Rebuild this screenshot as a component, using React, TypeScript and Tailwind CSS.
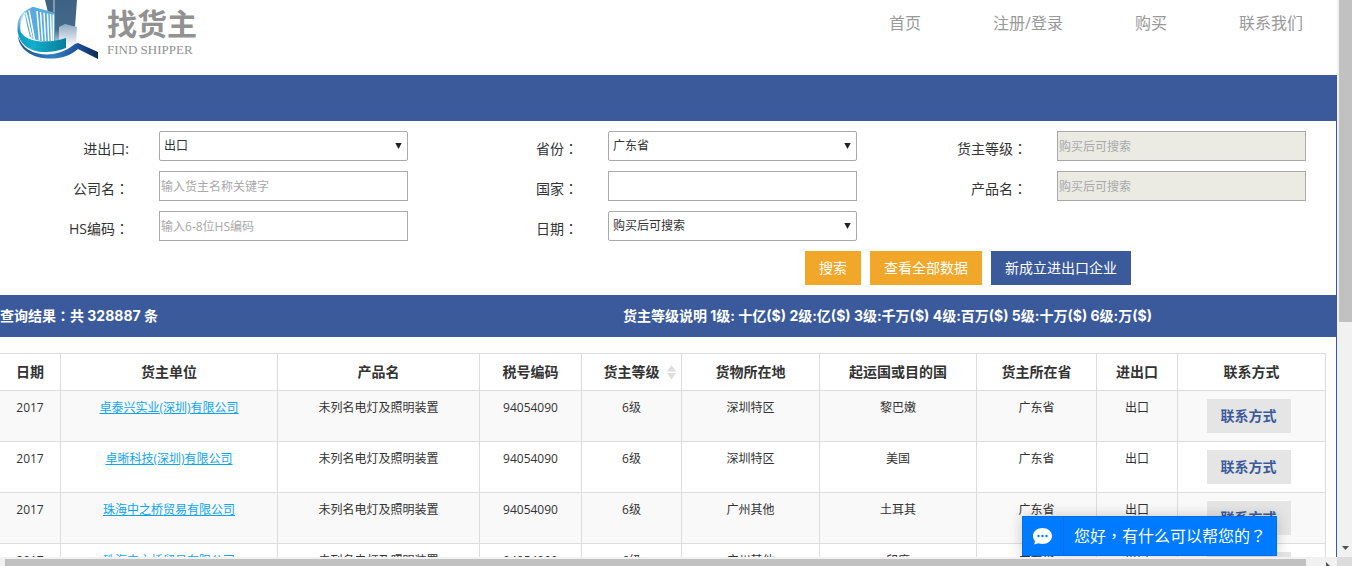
import { useState } from "react";
import type { ReactNode } from "react";

const NAV = ["首页", "注册/登录", "购买", "联系我们"];

const ROWS = [
  { company: "卓泰兴实业(深圳)有限公司", place: "深圳特区", country: "黎巴嫩" },
  { company: "卓晰科技(深圳)有限公司", place: "深圳特区", country: "美国" },
  { company: "珠海中之桥贸易有限公司", place: "广州其他", country: "土耳其" },
  { company: "珠海中之桥贸易有限公司", place: "广州其他", country: "印度" },
];

const HEAD_CELL = "h-[37px] border-r border-b border-[#ddd] p-0 text-center align-middle text-sm font-bold";
const CELL = "border-r border-b border-[#ddd] px-2 py-2 text-center align-top text-xs leading-[18px]";
const CONTROL =
  "block h-[30px] w-full border border-[#a9a9a9] text-xs text-[#333] placeholder:text-[#a9a9a9] outline-none";

/* Full-width punctuation, centred in its em box. */
function Mark({ children }: { children: ReactNode }) {
  return <span className="font-['Noto_Sans_CJK_TC',sans-serif] leading-none">{children}</span>;
}

function Logo() {
  return (
    <a href="#" className="flex items-start gap-2 pl-4 text-[#929292]">
      <svg width="83" height="60" viewBox="0 0 83 60" aria-hidden="true">
        <defs>
          <linearGradient id="ring" x1="0" x2="1">
            <stop offset="0" stopColor="#0a9cc4" />
            <stop offset=".3" stopColor="#12aecb" />
            <stop offset="1" stopColor="#077e9c" />
          </linearGradient>
          <linearGradient id="rim" x1="0" x2="1">
            <stop offset="0" stopColor="#1c4f94" />
            <stop offset=".45" stopColor="#2f7fc4" />
            <stop offset=".75" stopColor="#1f4f98" />
            <stop offset="1" stopColor="#0d2c50" />
          </linearGradient>
          <linearGradient id="block" x1="0" x2="0" y1="0" y2="1">
            <stop offset="0" stopColor="#8fa9bf" />
            <stop offset="1" stopColor="#ffffff" />
          </linearGradient>
          <linearGradient id="tower" x1="0" x2="0" y1="0" y2="1">
            <stop offset="0" stopColor="#3e6282" />
            <stop offset=".7" stopColor="#44698a" />
            <stop offset="1" stopColor="#b5c7d5" />
          </linearGradient>
          <linearGradient id="arc" x1="0" x2="0" y1="0" y2="1">
            <stop offset="0" stopColor="#bfe2f5" />
            <stop offset="1" stopColor="#1b85bd" />
          </linearGradient>
        </defs>
        <path d="M29 0h32l-2 27-1 14-19 1z" fill="url(#tower)" />
        <path d="M38 0v12" stroke="#c4d3df" strokeWidth="1" />
        <path d="M43 27l6-3 12 3-1 17-10 3-7-6z" fill="url(#block)" />
        <path d="M7.500 12l9.200-5.300L39 12.700V41c-9 2-18 0-25-4z" fill="#58abe0" />
        <path
          d="M10 12.500l6 25M13 10.500l5.500 29M21 11l2.500 29.500M24.500 12l2 29M28 12.800l1.600 28.500M31.500 13.500l1.200 28M34.500 14l1 27M37.300 14.500v27"
          stroke="#fff"
          strokeWidth="1.5"
        />
        <path d="M14 7.500C6 12 1.500 18 1.500 27v5l4 6C3 28 5 18 12 9z" fill="url(#arc)" />
        <path d="M9 12C4 18 3.500 24 4.500 29l8 8z" fill="#fff" opacity=".65" />
        <path d="M2 27c3 8 9 12.500 19 14 10 1.500 20 0 29-3v10c-9 3.500-19 5-28 3.500C11 49.500 3 42 2 33z" fill="url(#ring)" />
        <path
          d="M2 36c3 9 9 15 20 17.500 12 2.500 24-.5 32-6 3-2 5.500-4.500 8-4.500l20 9v7l-20-10c-8 7-18 10-30 9.500C17 58 3 50 2 36z"
          fill="url(#rim)"
        />
      </svg>
      <span className="block pt-1.5">
        <span className="block text-[30px] leading-9 font-bold">找货主</span>
        <span className="block font-['Liberation_Serif',serif] text-[13px] leading-4">FIND SHIPPER</span>
      </span>
    </a>
  );
}

function Field({ id, label, children }: { id: string; label: ReactNode; children: ReactNode }) {
  return (
    <div className="flex h-[30px]">
      <label htmlFor={id} className="mr-[30px] w-[129px] shrink-0 pt-2 text-right text-sm leading-5">
        {label}
      </label>
      <div className="min-w-0 flex-1">{children}</div>
    </div>
  );
}

function Select({ id, options }: { id: string; options: string[] }) {
  return (
    <div className="relative">
      <select id={id} className={`${CONTROL} appearance-none rounded-[2px] bg-white px-1`}>
        {options.map((o) => (
          <option key={o}>{o}</option>
        ))}
      </select>
      <svg className="pointer-events-none absolute top-3 right-1.5" width="7" height="6" viewBox="0 0 7 6" aria-hidden="true">
        <path d="M.3 0h6.400L3.500 6z" fill="#222" />
      </svg>
    </div>
  );
}

function TextField({ id, placeholder, disabled }: { id: string; placeholder?: string; disabled?: boolean }) {
  return (
    <input
      id={id}
      type="text"
      placeholder={placeholder}
      disabled={disabled}
      className={`${CONTROL} bg-white px-px disabled:bg-[#ebebe4]`}
    />
  );
}

function SearchForm() {
  return (
    <form className="py-2.5" onSubmit={(e) => e.preventDefault()}>
      <div className="grid grid-cols-3 gap-x-[41px] gap-y-2.5 pr-[30px]">
        <Field id="direction" label="进出口:">
          <Select id="direction" options={["出口", "进口"]} />
        </Field>
        <Field id="province" label={<>省份<Mark>：</Mark></>}>
          <Select id="province" options={["广东省"]} />
        </Field>
        <Field id="level" label={<>货主等级<Mark>：</Mark></>}>
          <TextField id="level" placeholder="购买后可搜索" disabled />
        </Field>
        <Field id="company" label={<>公司名<Mark>：</Mark></>}>
          <TextField id="company" placeholder="输入货主名称关键字" />
        </Field>
        <Field id="country" label={<>国家<Mark>：</Mark></>}>
          <TextField id="country" />
        </Field>
        <Field id="product" label={<>产品名<Mark>：</Mark></>}>
          <TextField id="product" placeholder="购买后可搜索" disabled />
        </Field>
        <Field id="hs" label={<>HS编码<Mark>：</Mark></>}>
          <TextField id="hs" placeholder="输入6-8位HS编码" />
        </Field>
        <Field id="date" label={<>日期<Mark>：</Mark></>}>
          <Select id="date" options={["购买后可搜索"]} />
        </Field>
      </div>
      <div className="mt-2.5 flex justify-end gap-[9px] pr-[205px] text-sm text-white">
        <button type="submit" className="h-[34px] bg-[#f0a72a] px-3.5">搜索</button>
        <button type="button" className="h-[34px] bg-[#f0a72a] px-3.5">查看全部数据</button>
        <button type="button" className="h-[34px] bg-[#3b5a9c] px-3.5">新成立进出口企业</button>
      </div>
    </form>
  );
}

function SortMark() {
  return (
    <svg width="9" height="16" viewBox="0 0 9 16" className="ml-[7px]" aria-hidden="true">
      <path d="M4.5 1L9 7.5H0zM4.5 15.500L9 9H0z" fill="#ddd" />
    </svg>
  );
}

function Results() {
  return (
    <table className="w-full table-fixed border-separate border-spacing-0 border-t border-[#ddd]">
      <colgroup>
        <col className="w-[61px]" />
        <col className="w-[217px]" />
        <col className="w-[202px]" />
        <col className="w-[102px]" />
        <col className="w-[100px]" />
        <col className="w-[138px]" />
        <col className="w-[157px]" />
        <col className="w-[120px]" />
        <col className="w-[81px]" />
        <col className="w-[148px]" />
      </colgroup>
      <thead>
        <tr>
          <th className={HEAD_CELL}>日期</th>
          <th className={HEAD_CELL}>货主单位</th>
          <th className={HEAD_CELL}>产品名</th>
          <th className={HEAD_CELL}>税号编码</th>
          <th className={HEAD_CELL}>
            <span className="grid grid-cols-[1fr_auto_1fr] items-center">
              <span className="col-start-2">货主等级</span>
              <SortMark />
            </span>
          </th>
          <th className={HEAD_CELL}>货物所在地</th>
          <th className={HEAD_CELL}>起运国或目的国</th>
          <th className={HEAD_CELL}>货主所在省</th>
          <th className={HEAD_CELL}>进出口</th>
          <th className={HEAD_CELL}>联系方式</th>
        </tr>
      </thead>
      <tbody>
        {ROWS.map((r, i) => (
          <tr key={i} className="odd:bg-[#f9f9f9]">
            <td className={CELL}>2017</td>
            <td className={CELL}>
              <a href="#" className="text-[#0ea5f0] underline">{r.company}</a>
            </td>
            <td className={CELL}>未列名电灯及照明装置</td>
            <td className={CELL}>94054090</td>
            <td className={CELL}>6级</td>
            <td className={CELL}>{r.place}</td>
            <td className={CELL}>{r.country}</td>
            <td className={CELL}>广东省</td>
            <td className={CELL}>出口</td>
            <td className={CELL}>
              <div className="flex justify-center pr-1.5">
                <button type="button" className="h-[34px] bg-[#e5e5e5] px-3.5 text-sm font-bold text-[#3b5a9c]">
                  联系方式
                </button>
              </div>
            </td>
          </tr>
        ))}
      </tbody>
    </table>
  );
}

function Chat({ onOpen }: { onOpen: () => void }) {
  return (
    <button
      type="button"
      onClick={onOpen}
      className="absolute right-[60px] bottom-px flex h-10 items-stretch border border-[#006fe8] bg-[#007aff] text-base text-white shadow-[0_0_14px_rgba(0,0,0,0.2)]"
    >
      <span className="flex w-[41px] items-center justify-center border-r border-[#006fe8]">
        <svg width="19" height="17" viewBox="0 0 19 17" aria-hidden="true">
          <path d="M9.500 0C4.300 0 0 3.500 0 8c0 2 .8 3.800 2 5.100L1.200 16.500l4.300-1.300c1.200.5 2.600.8 4 .8 5.200 0 9.500-3.500 9.500-8S14.700 0 9.500 0z" fill="#fff" />
          <circle cx="5.500" cy="8" r="1.200" fill="#007aff" />
          <circle cx="9.500" cy="8" r="1.200" fill="#007aff" />
          <circle cx="13.500" cy="8" r="1.200" fill="#007aff" />
        </svg>
      </span>
      <span className="self-center px-2.5">您好<Mark>，</Mark>有什么可以帮您的<Mark>？</Mark></span>
    </button>
  );
}

export default function App() {
  const [, setOpen] = useState(false);
  return (
    <div className="flex h-screen flex-col overflow-hidden bg-white font-['Open_Sans','Noto_Sans_CJK_SC',sans-serif] text-[#333]">
      <div className="flex min-h-0 flex-1">
        <div className="relative min-w-0 flex-1 overflow-hidden">
          <header className="flex h-[75px] items-start justify-between">
            <Logo />
            <nav className="flex gap-[72px] pt-[11px] pr-[34px] text-base leading-6 text-[#999]">
              {NAV.map((n) => (
                <a key={n} href="#">{n}</a>
              ))}
            </nav>
          </header>
          <main className="border-r border-[#3b5a9c]">
            <div className="h-[46px] bg-[#3b5a9c]" />
            <SearchForm />
            <div className="flex h-[42px] items-center bg-[#3b5a9c] font-[Inter,'Noto_Sans_CJK_SC',sans-serif] text-sm font-bold text-white">
              <p className="w-[623px] shrink-0">查询结果<Mark>：</Mark>共 328887 条</p>
              <p className="whitespace-nowrap">货主等级说明 1级: 十亿($) 2级:亿($) 3级:千万($) 4级:百万($) 5级:十万($) 6级:万($)</p>
            </div>
            <div className="pt-4 pr-2.5">
              <Results />
            </div>
          </main>
          <Chat onOpen={() => setOpen(true)} />
        </div>
        <div className="flex w-[15px] shrink-0 flex-col items-end justify-between bg-[#f1f1f1]" aria-hidden="true">
          <div className="h-[322px] w-[13px] bg-[#c1c1c1]" />
          <svg width="13" height="16" viewBox="0 0 13 16">
            <path d="M3 5h7L6.500 9z" fill="#505050" />
          </svg>
        </div>
      </div>
      <div className="flex h-[9px] shrink-0 bg-[#f1f1f1]" aria-hidden="true">
        <div className="mt-0.5 ml-[5px] flex-1 bg-[#c1c1c1]" />
        <svg width="31" height="9" viewBox="0 0 31 9">
          <path d="M20 5v4h4z" fill="#505050" />
        </svg>
        <div className="w-[15px] bg-[#dcdcdc]" />
      </div>
    </div>
  );
}
